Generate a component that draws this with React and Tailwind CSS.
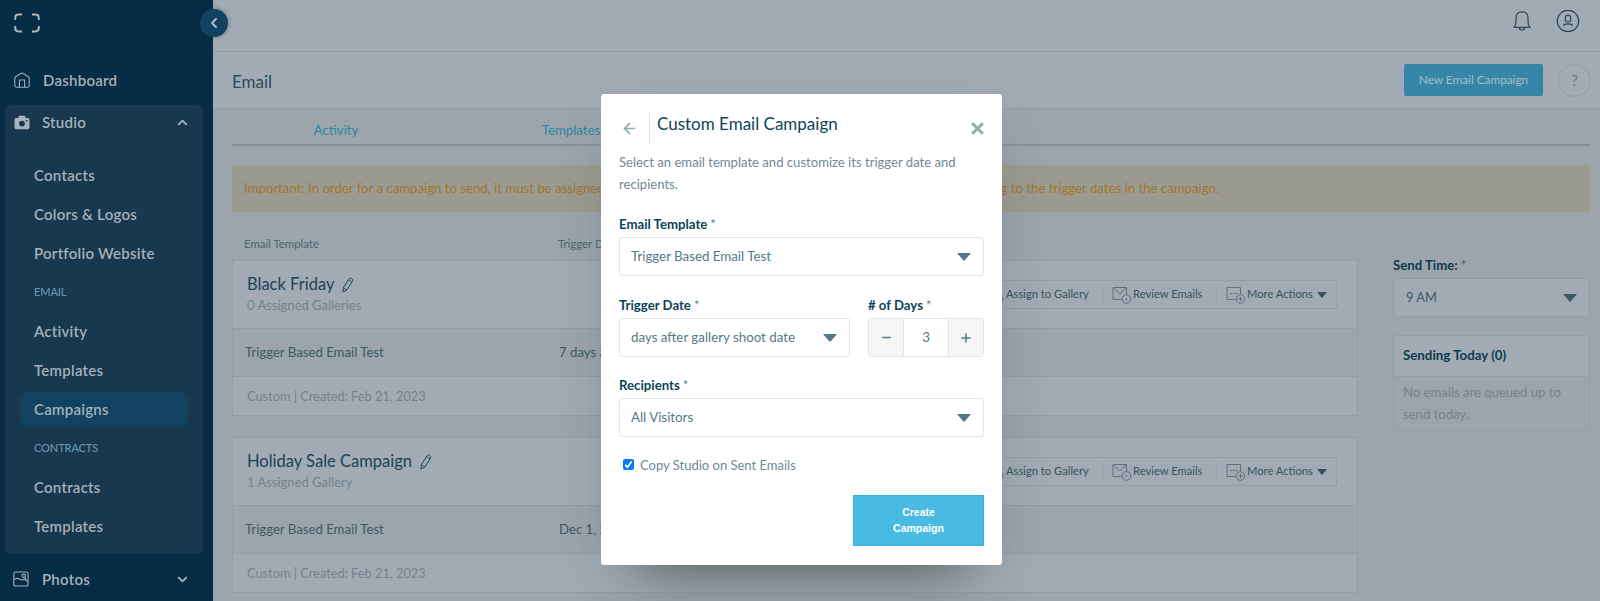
import { useState } from "react";
import { ChevronDown, ChevronLeft, ChevronUp, ArrowLeft, Minus, Plus } from "lucide-react";

const studioLinks = [
  { id: 1, label: "Contacts" },
  { id: 2, label: "Colors & Logos" },
  { id: 3, label: "Portfolio Website" },
  { id: 4, label: "EMAIL", heading: true },
  { id: 5, label: "Activity" },
  { id: 6, label: "Templates" },
  { id: 7, label: "Campaigns", active: true },
  { id: 8, label: "CONTRACTS", heading: true },
  { id: 9, label: "Contracts" },
  { id: 10, label: "Templates" },
];

const campaigns = [
  { id: 1, name: "Black Friday", galleries: "0 Assigned Galleries", trigger: "7 days after gallery shoot date" },
  { id: 2, name: "Holiday Sale Campaign", galleries: "1 Assigned Gallery", trigger: "Dec 1, 2023" },
];

// Icons
function LogoIcon() {
  return (
    <svg width="26" height="20" viewBox="0 0 26 20" fill="none" stroke="#a9b3ba" strokeWidth="2">
      <path d="M1.2 7V5Q1.2 1.6 4.6 1.6H8M18 1.6H21.4Q24.8 1.6 24.8 5V7M24.8 13V15Q24.8 18.4 21.4 18.4H18M8 18.4H4.6Q1.2 18.4 1.2 15V13" />
    </svg>
  );
}

function HomeIcon() {
  return (
    <svg width="16" height="16" viewBox="0 0 16 16" fill="none" stroke="#a3adb5" strokeWidth="1.1">
      <path d="M.8 6.2Q.8 5.3 1.6 4.8L7.3 1.2Q8 .8 8.7 1.2L14.4 4.8Q15.2 5.3 15.2 6.2V13.4Q15.2 15.2 13.4 15.2H2.6Q.8 15.2 .8 13.4Z" />
      <path d="M5.4 15V8H10.6V15" />
    </svg>
  );
}

function CameraIcon() {
  return (
    <svg width="16" height="15" viewBox="0 0 16 15" fill="#a9b3bb">
      <path d="M2 3H4.5V1.8Q4.5 .8 5.5 .8H10.3Q11.3 .8 11.3 1.8V3H13.8Q15.5 3 15.5 4.8V12.4Q15.5 14.2 13.8 14.2H2.2Q.5 14.2 .5 12.4V4.6Q.5 3 2 3Z" />
      <circle cx="8" cy="8.6" r="2.9" fill="#17384f" />
      <circle cx="12.7" cy="5.8" r=".9" fill="#17384f" />
    </svg>
  );
}

function PhotosIcon() {
  return (
    <svg width="16" height="16" viewBox="0 0 16 16" fill="none" stroke="#a3adb5" strokeWidth="1.1">
      <rect x=".8" y="1" width="14.2" height="14" rx="2" />
      <circle cx="10.8" cy="4.8" r="1.7" />
      <path d="M1 8.4Q4 6.600 6.500 8T11.500 8.200L15 10.800M12 6.400L13 9" />
    </svg>
  );
}

function BellIcon() {
  return (
    <svg width="20" height="22" viewBox="0 0 20 22" fill="none" stroke="#2c4655" strokeWidth="1.2">
      <path d="M2 17.3C3.800 15.600 4 14 4 11V7.800C4 4 6.200 1.800 10 1.800S16 4 16 7.800V11C16 14 16.200 15.600 18 17.300Z" strokeLinejoin="round" />
      <path d="M7.300 17.600Q7.600 20 10 20T12.700 17.600" />
    </svg>
  );
}

function UserIcon() {
  return (
    <svg width="24" height="24" viewBox="0 0 24 24" fill="none" stroke="#2c4655" strokeWidth="1.2">
      <circle cx="12" cy="12" r="10.700" />
      <ellipse cx="12" cy="9.600" rx="2.800" ry="3.400" />
      <path d="M7.500 17Q8 14.800 10.500 14.800Q12 15.800 13.500 14.800Q16 14.800 16.500 17" />
    </svg>
  );
}

function PencilIcon() {
  return (
    <svg width="12" height="16" viewBox="0 0 12 16" fill="none" stroke="#1c4355" strokeWidth="1" strokeLinejoin="round">
      <path d="M1 15L1.300 10.800L7.200 1.500Q7.800 .8 8.600 1.200L10.500 2.400Q11.200 2.900 10.800 3.700L4.900 12.900Z" />
      <path d="M1.300 10.800L4.900 12.900M6.400 2.800L10 5" strokeWidth=".8" />
    </svg>
  );
}

function ReviewIcon() {
  return (
    <svg width="20" height="18" viewBox="0 0 20 18" fill="none" stroke="#5b717d" strokeWidth="1">
      <path d="M9.500 13.500H1V1.500H14.500V8M1 1.500L7.800 8L14.500 1.500" />
      <circle cx="14.500" cy="13" r="4.300" />
      <circle cx="14.500" cy="13" r=".5" fill="#4c6572" />
    </svg>
  );
}

function MoreIcon() {
  return (
    <svg width="20" height="18" viewBox="0 0 20 18" fill="none" stroke="#5b717d" strokeWidth="1">
      <path d="M9.500 13.500H1V1.500H14.500V8" />
      <path d="M4 7.500H5.500M7 7.500H8.500M10 7.500H11.500" stroke="#40596a" />
      <circle cx="14.500" cy="13" r="4.300" />
      <path d="M12.300 13H16.700M14.500 10.800V15.200" />
    </svg>
  );
}

function Caret({ small }) {
  return (
    <svg width={small ? 10 : 14} height={small ? 6 : 8} viewBox="0 0 14 8" preserveAspectRatio="none" fill="currentColor">
      <path d="M0 0H14L7.800 7.300Q7 8 6.200 7.300Z" />
    </svg>
  );
}

function Sidebar() {
  return (
    <aside className="w-[213px] shrink-0 h-full bg-[#062c46] text-[#a6b0b8] tracking-[0.25px] overflow-hidden">
      <div className="h-[60px] pl-[14px] pt-[13px]">
        <LogoIcon />
      </div>
      <div className="h-10 flex items-center pl-[14px] text-[15px] font-semibold">
        <HomeIcon />
        <span className="ml-[13px]">Dashboard</span>
      </div>
      <div className="ml-[5px] mt-[5px] w-[198px] h-[449px] rounded-[7px] bg-[#17384f]">
        <div className="h-[35px] flex items-center pl-[9px] pr-[13px] text-[15px] font-semibold">
          <CameraIcon />
          <span className="ml-[12px] flex-1">Studio</span>
          <ChevronUp size={15} strokeWidth={3} />
        </div>
        <ul className="pt-[16px]">
          {studioLinks.map((link) => (
            <li key={link.id} className="h-[39px] flex items-center pl-[15px]">
              {link.heading ? (
                <span className="pl-[14px] text-[11px] font-medium tracking-[-0.1px] text-[#6797a8]">{link.label}</span>
              ) : (
                <a
                  href="#"
                  className={
                    link.active
                      ? "w-[168px] h-[35px] flex items-center pl-[14px] rounded-[7px] bg-[#114261] text-[15px] font-semibold"
                      : "w-[168px] h-[35px] flex items-center pl-[14px] text-[15px] font-semibold"
                  }
                >
                  {link.label}
                </a>
              )}
            </li>
          ))}
        </ul>
      </div>
      <div className="h-[50px] flex items-center pl-[13px] pr-[23px] text-[15px] font-semibold">
        <PhotosIcon />
        <span className="ml-[13px] flex-1">Photos</span>
        <ChevronDown size={15} strokeWidth={3} />
      </div>
    </aside>
  );
}

function CampaignCard({ campaign }) {
  return (
    <div className="w-[1126px] h-[156px] border border-[#8f9fa6] bg-[#a2abb3] mb-[21px]">
      <div className="h-[68px] flex items-start justify-between border-b border-[#8f9fa6] pl-[14px] pr-[20px]">
        <div className="pt-[12px]">
          <div className="h-[23px] flex items-center gap-[8px] text-[16.5px] text-[#1c4355]">
            <span>{campaign.name}</span>
            <PencilIcon />
          </div>
          <div className="h-[19px] flex items-center text-[13px] text-[#73848d]">{campaign.galleries}</div>
        </div>
        <div className="mt-[19px] h-[29px] flex items-center border border-[#8f9fa9] rounded-[2px] text-[11.2px] text-[#36535f] pr-[9px]">
          <span className="pl-[9px]">
            <ReviewIcon />
          </span>
          <span className="w-[82px] ml-[2px] whitespace-nowrap">Assign to Gallery</span>
          <span className="ml-[14px] mr-[9px] w-px h-[18px] bg-[#8f9fa9]"></span>
          <ReviewIcon />
          <span className="ml-[1px] w-[70px] whitespace-nowrap">Review Emails</span>
          <span className="ml-[13px] mr-[9px] w-px h-[18px] bg-[#8f9fa9]"></span>
          <MoreIcon />
          <span className="ml-[1px] w-[70px] whitespace-nowrap">More Actions</span>
          <Caret small />
        </div>
      </div>
      <div className="h-[48px] flex items-center bg-[#9ca5ab] border-b border-[#8f9fa6] pl-[12px] text-[13.2px] text-[#3c5965]">
        <span className="w-[314px]">Trigger Based Email Test</span>
        <span>{campaign.trigger}</span>
      </div>
      <div className="h-[38px] flex items-center pt-px pl-[14px] text-[12.8px] text-[#73848d]">
        Custom | Created: Feb 21, 2023
      </div>
    </div>
  );
}

function Label({ children }) {
  return (
    <div className="h-[25px] flex items-center gap-[3px] text-[13.2px] font-bold text-[#0e4358]">
      <span>{children}</span>
      <span className="font-normal text-[#5c7d8a]">*</span>
    </div>
  );
}

function SelectBox({ value }) {
  return (
    <div className="h-[39px] flex items-center justify-between border border-[#dfe7e8] rounded-[3px] pl-[11px] pr-[12px] text-[13.3px] text-[#567884]">
      <span className="pt-px">{value}</span>
      <Caret />
    </div>
  );
}

function CampaignModal() {
  const [days, setDays] = useState(3);
  const [copyStudio, setCopyStudio] = useState(true);

  return (
    <div className="absolute left-[601px] top-[94px] w-[401px] h-[471px] rounded-[3px] bg-white px-[18px] shadow-[0_42px_50px_-38px_rgba(60,68,62,0.75),0_12px_50px_0px_rgba(60,80,90,0.1)]">
      <div className="h-[57px] flex">
        <div className="w-[31px] mt-[19px] h-[31px] flex items-center pl-[2px] border-r border-[#dde4e6] text-[#94a9b0]">
          <ArrowLeft size={17} strokeWidth={2.4} />
        </div>
        <h2 className="flex-1 pl-[7px] pt-[18px] text-[17px] leading-[24px] text-[#0e4358]">Custom Email Campaign</h2>
        <button className="mt-[10px] h-[48px] text-[#94a9b0]">
          <svg width="13" height="13" viewBox="0 0 13 13" stroke="currentColor" strokeWidth="3">
            <path d="M1.200 1.200L11.800 11.800M11.800 1.200L1.200 11.800" />
          </svg>
        </button>
      </div>
      <p className="text-[13.1px] leading-[22px] text-[#6f8a94] whitespace-nowrap">
        Select an email template and customize its trigger date and
        <br />
        recipients.
      </p>
      <div className="mt-[17px]">
        <Label>Email Template</Label>
        <SelectBox value="Trigger Based Email Test" />
      </div>
      <div className="mt-[17px] flex justify-between">
        <div className="w-[231px]">
          <Label>Trigger Date</Label>
          <SelectBox value="days after gallery shoot date" />
        </div>
        <div className="w-[116px]">
          <Label># of Days</Label>
          <div className="h-[39px] flex border border-[#dfe7e8] rounded-[3px] text-[13.3px] text-[#567884]">
            <button className="w-[35px] flex items-center justify-center bg-[#f5f5f5] border-r border-[#dfe7e8]" onClick={() => setDays(days - 1)}>
              <Minus size={13} strokeWidth={2.500} />
            </button>
            <span className="flex-1 flex items-center justify-center">{days}</span>
            <button className="w-[35px] flex items-center justify-center bg-[#f5f5f5] border-l border-[#dfe7e8]" onClick={() => setDays(days + 1)}>
              <Plus size={14} strokeWidth={2.500} />
            </button>
          </div>
        </div>
      </div>
      <div className="mt-[16px]">
        <Label>Recipients</Label>
        <SelectBox value="All Visitors" />
      </div>
      <div className="mt-[17px] h-[24px] flex items-center pl-[4px]">
        <button
          className="w-[11px] h-[11px] -mt-[4px] rounded-[2px] bg-[#0b78f6] flex items-center justify-center"
          onClick={() => setCopyStudio(!copyStudio)}
        >
          {copyStudio && (
            <svg width="9" height="9" viewBox="0 0 9 9" fill="none" stroke="white" strokeWidth="1.700">
              <path d="M1.200 4.800L3.500 7.200L7.600 1.500" />
            </svg>
          )}
        </button>
        <span className="ml-[6px] text-[13px] text-[#6f8a94]">Copy Studio on Sent Emails</span>
      </div>
      <div className="mt-[17px] flex justify-end">
        <button className="w-[131px] h-[51px] pb-px bg-[#49bbe3] border border-[#35b2e0] text-white text-[10.5px] leading-[16px] font-semibold font-['Liberation_Sans',sans-serif]">
          Create
          <br />
          Campaign
        </button>
      </div>
    </div>
  );
}

export default function App() {
  return (
    <div className="relative w-[1600px] h-[601px] overflow-hidden flex bg-[#9ca5ab] font-[Lato,sans-serif]">
      <Sidebar />

      <main className="flex-1 min-w-0">
        {/* Top bar */}
        <header className="h-[52px] flex items-center justify-end gap-[24px] pr-[20px] pb-[9px] bg-[#a2abb3] border-b border-[#8f9fa6]">
          <BellIcon />
          <UserIcon />
        </header>
        <div className="h-[57px] flex items-center pl-[19px] pr-[9px] bg-[#a2abb3] border-b border-[#8f9fa6]">
          <h1 className="flex-1 pt-[3px] text-[17px] text-[#264d5d]">Email</h1>
          <button className="w-[139px] h-[32px] rounded-[2px] bg-[#3687a7] text-[11.8px] text-[#a9bcc8]">New Email Campaign</button>
          <span className="ml-[15px] w-[33px] h-[33px] rounded-full border border-[#8b9da4] flex items-center justify-center text-[15px] text-[#667c86]">?</span>
        </div>

        <div className="pl-[19px] pr-[10px]">
          <nav className="h-[37px] flex items-center pt-[8px] border-b-2 border-[#82929b] text-[13.2px] text-[#2c86a8]">
            <span className="w-[208px] text-center">Activity</span>
            <span className="ml-[27px] w-[208px] text-center">Templates</span>
          </nav>
          <div className="mt-[19px] h-[47px] flex items-center px-[12px] bg-[#9c9b91] pt-px text-[13.2px] text-[#a2752f] whitespace-nowrap">
            <div className="w-[975px] flex justify-between">
              <span>Important: In order for a campaign to send, it must be assigned</span>
              <span>according to the trigger dates in the campaign.</span>
            </div>
          </div>

          <div className="flex justify-between">
            <section>
              <div className="h-[48px] flex items-center pt-[16px] pl-[12px] text-[11.4px] text-[#4a6570]">
                <span className="w-[314px]">Email Template</span>
                <span>Trigger Date</span>
              </div>
              {campaigns.map((campaign) => (
                <CampaignCard key={campaign.id} campaign={campaign} />
              ))}
            </section>

            <section className="w-[197px] pt-[41px]">
              <div className="h-[25px] flex items-center gap-[3px] text-[13.2px] font-bold text-[#0d3c50]">
                <span>Send Time:</span>
                <span className="font-normal text-[#3c5965]">*</span>
              </div>
              <div className="h-[39px] flex items-center justify-between border border-[#8f9fa6] rounded-[3px] bg-[#a2abb3] pl-[12px] pr-[12px] text-[12.8px] text-[#3c5965]">
                <span className="pt-px">9 AM</span>
                <Caret />
              </div>
              <div className="mt-[18px] h-[96px] border border-[#8f9fa6] rounded-[3px] overflow-hidden">
                <div className="h-[41px] flex items-center pl-[9px] bg-[#a2abb3] border-b border-[#8f9fa6] text-[13.3px] font-bold text-[#0d3c50]">
                  Sending Today (0)
                </div>
                <p className="pl-[9px] pt-[4px] text-[13.1px] leading-[22px] text-[#73848d] whitespace-nowrap">
                  No emails are queued up to
                  <br />
                  send today.
                </p>
              </div>
            </section>
          </div>
        </div>
      </main>

      {/* Sidebar collapse toggle */}
      <button className="absolute left-[200px] top-[9px] w-[28px] h-[28px] rounded-full bg-[#114261] text-[#b3bdc4] flex items-center justify-center shadow-[0_0_5px_rgba(10,40,60,0.4)]">
        <ChevronLeft size={16} strokeWidth={2.800} />
      </button>

      <CampaignModal />
    </div>
  );
}
